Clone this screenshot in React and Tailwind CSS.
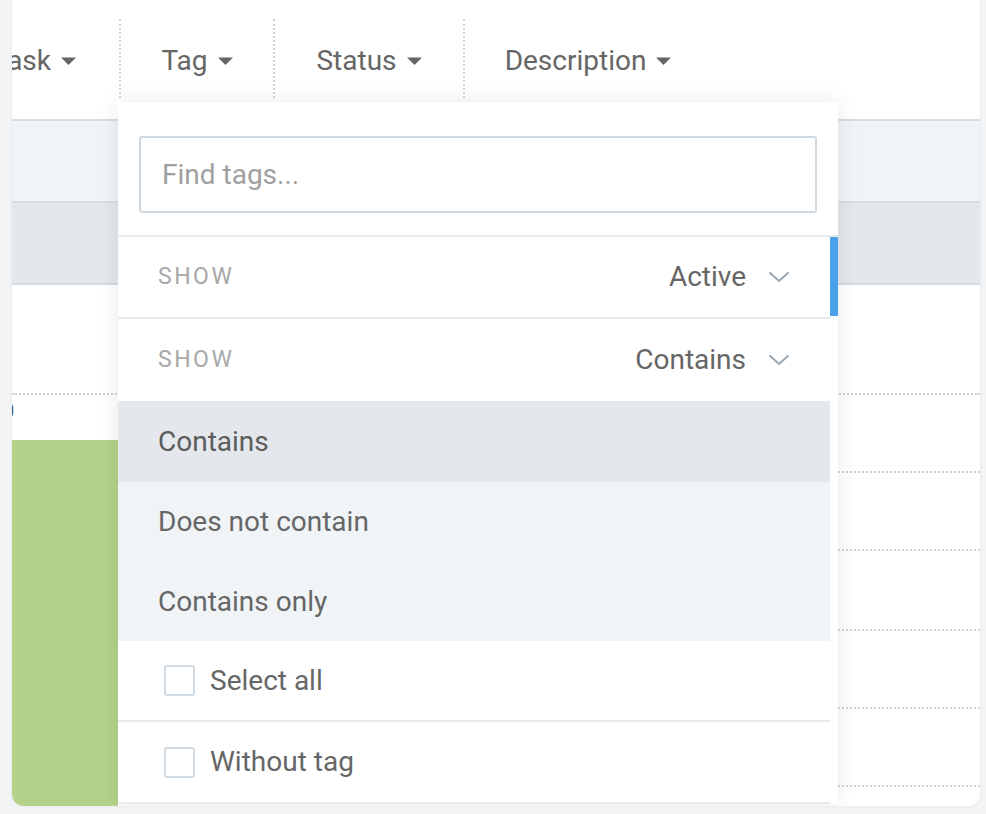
import React from "react";

function Caret() {
  return (
    <svg width="15" height="8" viewBox="0 0 15 8" className="shrink-0">
      <path d="M0 0.5 L15 0.5 L7.5 8 Z" fill="#666" />
    </svg>
  );
}

function Chevron() {
  return (
    <svg width="22" height="12" viewBox="0 0 22 12" className="shrink-0">
      <path d="M1.5 1.5 L11 10 L20.5 1.5" fill="none" stroke="#9aa6b2" strokeWidth="2" />
    </svg>
  );
}

function HeaderCol({ label, width, first }) {
  return (
    <div className={`shrink-0 pt-[19px] h-[100px] ${width}`}>
      <div
        className={`h-[79px] pt-[4px] flex items-center justify-center gap-[10px] ${
          first ? "" : "border-l-2 border-dotted border-[#cfd6dc]"
        }`}
      >
        <span className="text-[28px] text-[#666]">{label}</span>
        <Caret />
      </div>
    </div>
  );
}

function Checkbox() {
  return <div className="w-[31px] h-[31px] border-2 border-[#d3dbe2] rounded-[3px] bg-white shrink-0" />;
}

export default function App() {
  return (
    <div
      className="w-[986px] h-[814px] bg-[#f3f4f5] pl-[12px] pr-[6px] overflow-hidden"
      style={{ fontFamily: "Roboto, 'Liberation Sans', sans-serif" }}
    >
      <div className="relative h-[806px] bg-white rounded-b-[12px] overflow-hidden shadow-[0_0_4px_rgba(0,0,0,0.06)]">
        {/* Header */}
        <div className="flex h-[100px] ml-[-63px]">
          <HeaderCol label="Task" width="w-[170px]" first />
          <HeaderCol label="Tag" width="w-[154px]" />
          <HeaderCol label="Status" width="w-[190px]" />
          <HeaderCol label="Description" width="w-[248px]" />
        </div>

        {/* Body */}
        <div className="h-[19px]" />
        <div className="h-[82px] border-t-2 border-[#d6dde3] bg-[#f0f4f7]" />
        <div className="h-[84px] border-y-2 border-[#d6dde3] bg-[#e3e8ec]" />
        <div className="h-[110px] border-b-2 border-dotted border-[#cfcfcf]" />
        <div className="flex h-[411px]">
          <div className="w-[106px] flex flex-col">
            <div className="h-[45px] text-[20px] text-[#555] ml-[-9px] pt-[6px] leading-none">0</div>
            <div className="flex-1 bg-[#b4d28a]" />
          </div>
          <div className="flex-1 flex flex-col">
            <div className="h-[78px] border-b-2 border-dotted border-[#d2d2d2]" />
            <div className="h-[78px] border-b-2 border-dotted border-[#d2d2d2]" />
            <div className="h-[80px] border-b-2 border-dotted border-[#d2d2d2]" />
            <div className="h-[78px] border-b-2 border-dotted border-[#d2d2d2]" />
            <div className="h-[78px] border-b-2 border-dotted border-[#d2d2d2]" />
          </div>
        </div>

        {/* Dropdown */}
        <div className="absolute left-[106px] top-[102px] w-[720px] bg-white shadow-[0_0_22px_rgba(0,0,0,0.09)]">
          <div className="px-[21px] pt-[34px] pb-[22px] border-b-2 border-[#e7ecf0]">
            <div className="h-[77px] border-2 border-[#d0d9e0] rounded-[3px] flex items-center px-[21px]">
              <span className="text-[28px] text-[#a0a0a0]">Find tags...</span>
            </div>
          </div>
          <div className="flex">
            <div className="flex-1 flex flex-col">
              <div className="h-[82px] border-b-2 border-[#e7ecf0] flex items-center justify-between pl-[40px] pr-[40px]">
                <span className="text-[23px] tracking-[0.11em] text-[#a8a8a8]">SHOW</span>
                <div className="flex items-center gap-[22px]">
                  <span className="text-[28px] text-[#666]">Active</span>
                  <Chevron />
                </div>
              </div>
              <div className="h-[82px] flex items-center justify-between pl-[40px] pr-[40px]">
                <span className="text-[23px] tracking-[0.11em] text-[#a8a8a8]">SHOW</span>
                <div className="flex items-center gap-[22px]">
                  <span className="text-[28px] text-[#666]">Contains</span>
                  <Chevron />
                </div>
              </div>
              <div className="h-[81px] bg-[#e4e8ec] flex items-center pl-[40px]">
                <span className="text-[28px] text-[#5c5c5c]">Contains</span>
              </div>
              <div className="h-[80px] bg-[#f0f4f7] flex items-center pl-[40px]">
                <span className="text-[28px] text-[#666]">Does not contain</span>
              </div>
              <div className="h-[79px] bg-[#f0f4f7] flex items-center pl-[40px]">
                <span className="text-[28px] text-[#666]">Contains only</span>
              </div>
              <div className="h-[81px] border-b-2 border-[#e7ecf0] flex items-center pl-[46px] gap-[15px]">
                <Checkbox />
                <span className="text-[28px] text-[#666]">Select all</span>
              </div>
              <div className="h-[82px] border-b-2 border-[#e7ecf0] flex items-center pl-[46px] gap-[15px]">
                <Checkbox />
                <span className="text-[28px] text-[#666]">Without tag</span>
              </div>
            </div>
            <div className="w-[8px]">
              <div className="h-[79px] bg-[#4aa1ea] rounded-[1px]" />
            </div>
          </div>
        </div>
      </div>
    </div>
  );
}
